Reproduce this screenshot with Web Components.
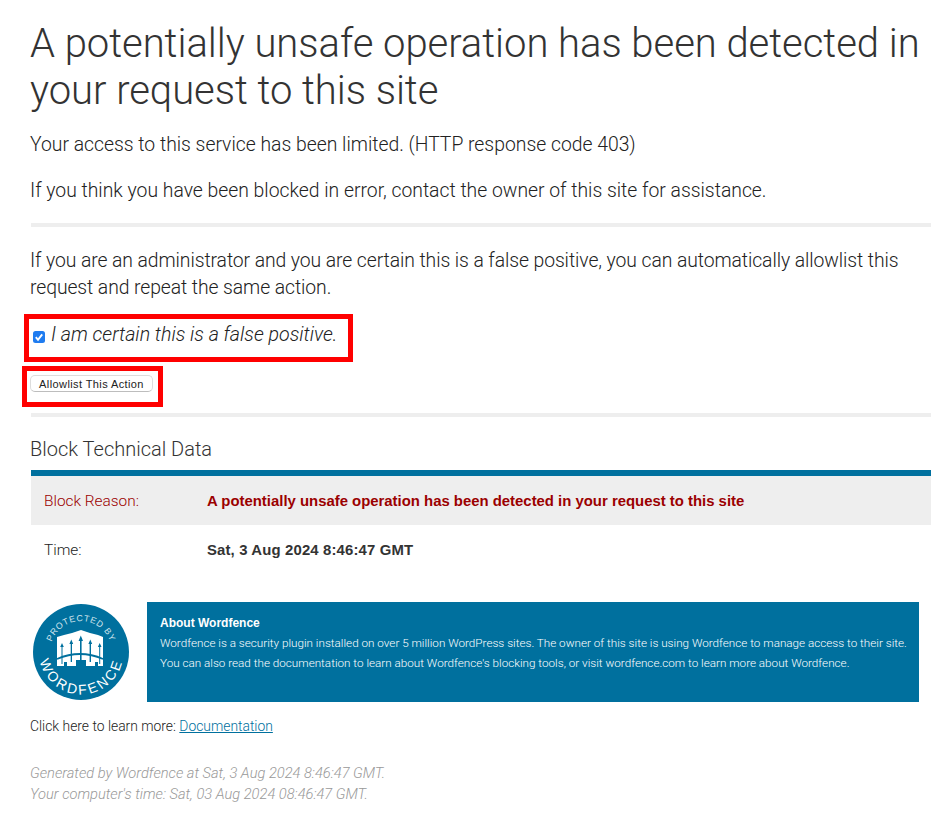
<!DOCTYPE html>
<html>
<head>
<meta charset="utf-8">
<title>403 Forbidden</title>
<style>
  html, body { margin: 0; padding: 0; background: #fff; }
  body { font-family: Roboto, "Liberation Sans", Arial, sans-serif; font-weight: 300; color: #333; overflow: hidden; }
</style>
</head>
<body>
<block-page></block-page>
<script>
class WfRule extends HTMLElement {
  constructor() {
    super();
    this.attachShadow({mode: 'open'}).innerHTML = `
    <style>:host { display: block; height: 4px; background: #eee; margin-left: 1px; }</style>`;
  }
}

class WfNotice extends HTMLElement {
  constructor() {
    super();
    this.attachShadow({mode: 'open'}).innerHTML = `
    <style>
      :host { display: block; }
      h1 {
        font-size: 40px;
        font-weight: 300;
        letter-spacing: -0.04px;
        line-height: 47px;
        margin: 0;
        color: #333;
      }
      p {
        font-size: 19.35px;
        line-height: 27px;
        margin: 0;
        color: #222;
      }
      .first { margin-top: 17px; }
      .second { margin-top: 19px; }
    </style>
    <h1><slot name="title"></slot></h1>
    <p class="first"><slot name="limited"></slot></p>
    <p class="second"><slot name="contact"></slot></p>`;
  }
}

class WfAllowlist extends HTMLElement {
  constructor() {
    super();
    this.attachShadow({mode: 'open'}).innerHTML = `
    <style>
      :host { display: block; }
      p {
        font-size: 19.35px;
        letter-spacing: -0.08px;
        line-height: 27px;
        margin: 0;
        color: #222;
      }
      .outlined {
        box-sizing: border-box;
        border: 5px solid #f00;
      }
      .confirm {
        display: flex;
        align-items: center;
        width: 329px;
        height: 48px;
        margin: 13px 0 0 -6px;
        padding: 0 0 8px 4px;
        font-size: 19.6px;
        font-style: italic;
        white-space: nowrap;
        color: #222;
      }
      .box {
        width: 12px;
        height: 12px;
        margin: 6px 6px 0 0;
        flex: none;
      }
      .action {
        display: flex;
        align-items: center;
        width: 141px;
        height: 41px;
        margin: 4px 0 0 -8px;
        padding: 0 0 6px 3px;
      }
      button {
        box-sizing: border-box;
        width: 123px;
        height: 17px;
        padding: 0;
        font: 11px "Liberation Sans", Arial, sans-serif;
        letter-spacing: 0.4px;
        color: #222;
        background: #fff;
        border: 1px solid #ddd;
        border-bottom-color: #bdbdbd;
        border-radius: 5px;
      }
    </style>
    <p><slot name="intro"></slot></p>
    <label class="confirm outlined">
      <svg class="box" viewBox="0 0 12 12">
        <rect width="12" height="12" rx="2.5" fill="#1f7cf0"/>
        <path d="M2.8 6.2 5 8.8 9.2 3.4" fill="none" stroke="#fff" stroke-width="1.9"/>
      </svg>
      <slot name="certain"></slot>
    </label>
    <div class="action outlined"><button><slot name="button"></slot></button></div>`;
  }
}

class WfDataTable extends HTMLElement {
  constructor() {
    super();
    this.attachShadow({mode: 'open'}).innerHTML = `
    <style>
      :host { display: block; }
      h2 {
        font-size: 20px;
        font-weight: 300;
        line-height: 24px;
        margin: 0 0 9px;
        color: #333;
      }
      .rows { border-top: 6px solid #00709e; margin-left: 1px; }
    </style>
    <h2><slot name="heading"></slot></h2>
    <div class="rows"><slot></slot></div>`;
  }
}

class WfDataRow extends HTMLElement {
  constructor() {
    super();
    this.attachShadow({mode: 'open'}).innerHTML = `
    <style>
      :host {
        display: grid;
        grid-template-columns: 163px 1fr;
        align-items: center;
        height: 50px;
        padding-left: 13px;
        font-size: 15.4px;
        color: #222;
      }
      :host([alert]) {
        height: 49px;
        background: #eee;
        color: #9b0000;
      }
      .value { font-family: "Liberation Sans", Arial, sans-serif; font-size: 14.9px; font-weight: bold; }
      :host(:not([alert])) .value { letter-spacing: 0.15px; color: #333; }
    </style>
    <div><slot name="label"></slot></div>
    <div class="value"><slot></slot></div>`;
  }
}

class WfBadge extends HTMLElement {
  constructor() {
    super();
    this.attachShadow({mode: 'open'}).innerHTML = `
    <style>
      :host { display: block; width: 96px; height: 96px; flex: none; }
      svg { display: block; }
      text { font-family: "Liberation Sans", Arial, sans-serif; }
    </style>
    <svg width="96" height="96" viewBox="0 0 96 96">
      <circle cx="48" cy="48" r="48" fill="#00709e"/>
      <defs>
        <path id="top" d="M18.7 37.9A31 31 0 0 1 79 48"/>
        <path id="bottom" d="M7 57A42 42 0 0 0 89 58"/>
      </defs>
      <text font-size="8.8" letter-spacing="0.65" fill="#cfe3ec"><textPath href="#top">PROTECTED BY</textPath></text>
      <text font-size="14" letter-spacing="2.6" fill="#fff"><textPath href="#bottom">WORDFENCE</textPath></text>
      <path d="M24 33 31 31Q40 29 48 26 56 29 65 31L70 33V62H65V58H62V62H53V56H43V62H34V58H31V62H24Z" fill="#fff"/>
      <g fill="#00709e">
        <path d="M28.5 41H29.5V60H28.5ZM37.7 38H39V58H37.7ZM47 34H48.6V58H47ZM56.6 38H58V58H56.6ZM66.2 41H67.2V60H66.2Z"/>
        <path d="M29 39 27.2 43H30.8ZM38.3 35.5 36.4 40H40.2ZM47.8 31.5 45.6 37H50ZM57.3 35.5 55.4 40H59.2ZM66.7 39 64.9 43H68.5Z"/>
      </g>
      <path d="M24 55Q47 45 70 55" fill="none" stroke="#00709e" stroke-width="1.8"/>
    </svg>`;
  }
}

class WfAbout extends HTMLElement {
  constructor() {
    super();
    this.attachShadow({mode: 'open'}).innerHTML = `
    <style>
      :host {
        display: block;
        flex: 1;
        min-width: 0;
        height: 100px;
        box-sizing: border-box;
        padding: 14px 13px 0;
        background: #00709e;
        color: #fff;
        font-size: 11.7px;
        line-height: 20px;
        white-space: nowrap;
      }
      b {
        display: block;
        font-family: "Liberation Sans", Arial, sans-serif;
        font-size: 12px;
        font-weight: bold;
        line-height: 15px;
        margin-bottom: 2px;
      }
    </style>
    <b><slot name="heading"></slot></b>
    <slot></slot>`;
  }
}

class BlockPage extends HTMLElement {
  constructor() {
    super();
    this.attachShadow({mode: 'open'}).innerHTML = `
    <style>
      :host {
        display: block;
        padding: 20px 0 0 30px;
      }
      wf-rule.one { margin-top: 19px; }
      wf-allowlist { margin-top: 20px; }
      wf-rule.two { margin-top: 6px; }
      wf-data-table { margin-top: 20px; }
      .about {
        display: flex;
        align-items: center;
        gap: 18px;
        margin: 27px 12px 0 3px;
      }
      .more {
        font-size: 13.87px;
        line-height: 18px;
        margin-top: 15px;
        color: #222;
      }
      a { color: #00709e; text-decoration: underline; }
      .generated {
        font-size: 14.67px;
        font-style: italic;
        line-height: 21px;
        margin-top: 28px;
        color: #999;
      }
    </style>
    <wf-notice>
      <span slot="title">A potentially unsafe operation has been detected in your request to this site</span>
      <span slot="limited">Your access to this service has been limited. (HTTP response code 403)</span>
      <span slot="contact">If you think you have been blocked in error, contact the owner of this site for assistance.</span>
    </wf-notice>
    <wf-rule class="one"></wf-rule>
    <wf-allowlist>
      <span slot="intro">If you are an administrator and you are certain this is a false positive, you can automatically allowlist this request and repeat the same action.</span>
      <span slot="certain">I am certain this is a false positive.</span>
      <span slot="button">Allowlist This Action</span>
    </wf-allowlist>
    <wf-rule class="two"></wf-rule>
    <wf-data-table>
      <span slot="heading">Block Technical Data</span>
      <wf-data-row alert>
        <span slot="label">Block Reason:</span>
        A potentially unsafe operation has been detected in your request to this site
      </wf-data-row>
      <wf-data-row>
        <span slot="label">Time:</span>
        Sat, 3 Aug 2024 8:46:47 GMT
      </wf-data-row>
    </wf-data-table>
    <div class="about">
      <wf-badge></wf-badge>
      <wf-about>
        <span slot="heading">About Wordfence</span>
        Wordfence is a security plugin installed on over 5 million WordPress sites. The owner of this site is using Wordfence to manage access to their site.<br>
        You can also read the documentation to learn about Wordfence's blocking tools, or visit wordfence.com to learn more about Wordfence.
      </wf-about>
    </div>
    <div class="more">Click here to learn more: <a href="#">Documentation</a></div>
    <div class="generated">Generated by Wordfence at Sat, 3 Aug 2024 8:46:47 GMT.<br>Your computer's time: Sat, 03 Aug 2024 08:46:47 GMT.</div>`;
  }
}

customElements.define('wf-rule', WfRule);
customElements.define('wf-notice', WfNotice);
customElements.define('wf-allowlist', WfAllowlist);
customElements.define('wf-data-table', WfDataTable);
customElements.define('wf-data-row', WfDataRow);
customElements.define('wf-badge', WfBadge);
customElements.define('wf-about', WfAbout);
customElements.define('block-page', BlockPage);
</script>
</body>
</html>
